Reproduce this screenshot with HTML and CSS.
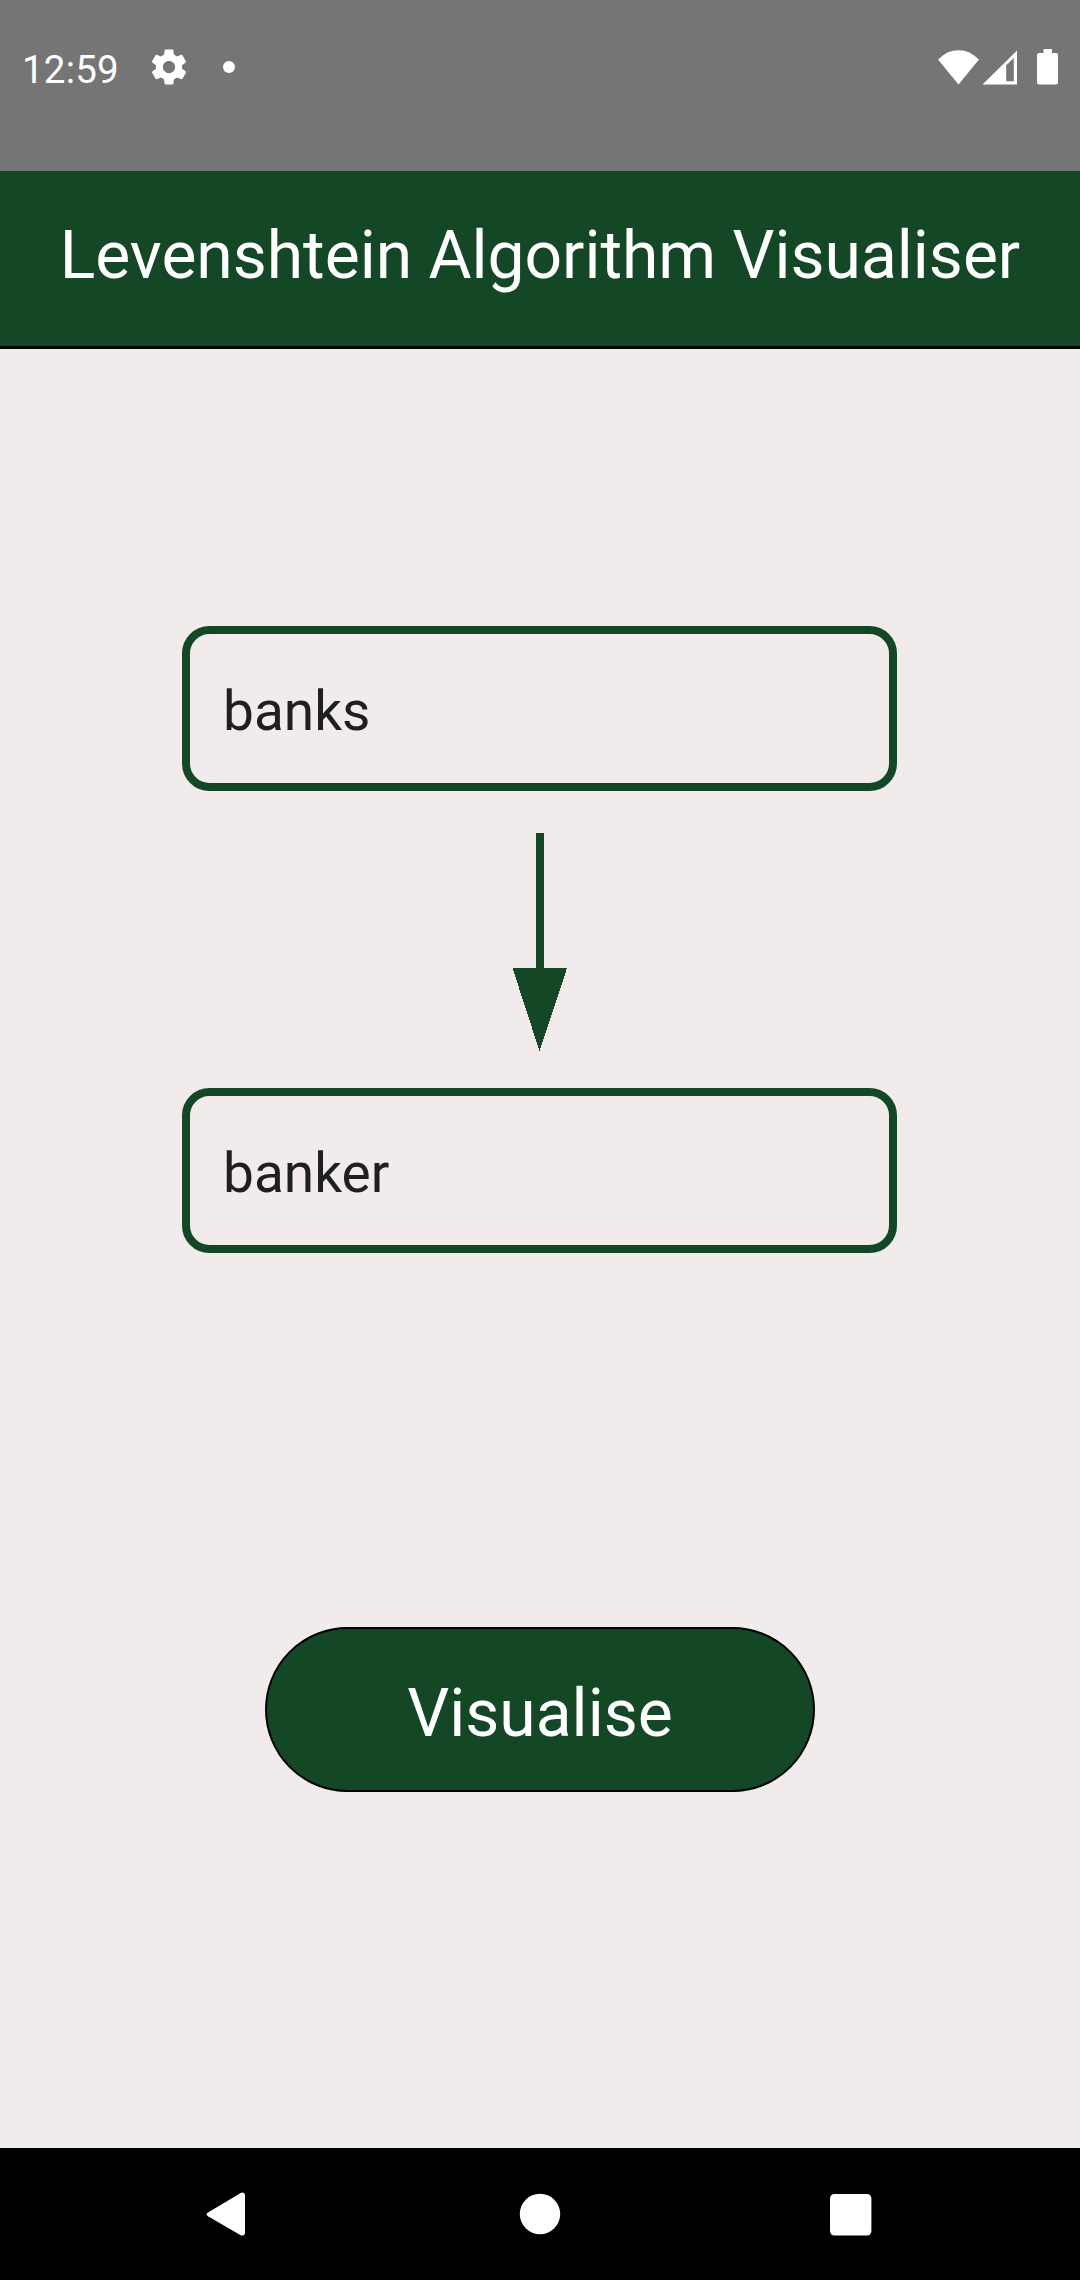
FILE: index.html
```html
<!DOCTYPE html>
<html lang="en">
<head>
<meta charset="utf-8">
<title>Levenshtein Algorithm Visualiser</title>
<link rel="stylesheet" href="styles.css">
</head>
<body>
<div class="screen">
  <div class="status-bar">
    <span class="clock">12:59</span>
    <svg class="gear" viewBox="0 0 24 24"><path d="M19.43 12.98c.04-.32.07-.64.07-.98s-.03-.66-.07-.98l2.11-1.65c.19-.15.24-.42.12-.64l-2-3.46c-.12-.22-.39-.3-.61-.22l-2.49 1c-.52-.4-1.08-.73-1.69-.98l-.38-2.65C14.46 2.18 14.25 2 14 2h-4c-.25 0-.46.18-.49.42l-.38 2.65c-.61.25-1.17.59-1.69.98l-2.49-1c-.23-.09-.49 0-.61.22l-2 3.46c-.13.22-.07.49.12.64l2.11 1.65c-.04.32-.07.65-.07.98s.03.66.07.98l-2.11 1.65c-.19.15-.24.42-.12.64l2 3.46c.12.22.39.3.61.22l2.49-1c.52.4 1.08.73 1.69.98l.38 2.65c.03.24.24.42.49.42h4c.25 0 .46-.18.49-.42l.38-2.65c.61-.25 1.17-.59 1.69-.98l2.49 1c.23.09.49 0 .61-.22l2-3.46c.12-.22.07-.49-.12-.64l-2.11-1.65zM12 15.5c-1.93 0-3.5-1.57-3.5-3.5s1.57-3.5 3.5-3.5 3.5 1.57 3.5 3.5-1.57 3.5-3.5 3.5z"/></svg>
    <span class="dot"></span>
    <svg class="system-icons" viewBox="0 0 122 38">
      <path d="M0 11.5Q9 2.2 20.5 2.2T41 11.5L20.5 36.5Z"/>
      <path fill-rule="evenodd" d="M44.5 36.5L79 2.5V36.5ZM68.2 17.3V33.3H75.8V10Z"/>
      <path d="M105.5 1H114V5H118Q120 5 120 7V34.5Q120 36.5 118 36.5H101Q99 36.5 99 34.5V7Q99 5 101 5H105.5Z"/>
    </svg>
  </div>
  <header class="app-bar"><h1 class="title">Levenshtein Algorithm Visualiser</h1></header>
  <main class="content">
    <input class="word" type="text" value="banks" aria-label="Source word">
    <svg class="arrow" viewBox="0 0 56 218" shape-rendering="crispEdges"><path d="M24 0h8v135h23L27.500 218L0.500 135H24Z"/></svg>
    <input class="word" type="text" value="banker" aria-label="Target word">
    <button class="visualise" type="button">Visualise</button>
  </main>
  <nav class="nav-bar">
    <svg class="nav-icon" viewBox="0 0 60 60"><path d="M9 28.400L41.700 8.900Q45.500 7.400 46 11V49Q45.500 52.600 41.700 51.200L9 32.200Q6 30.300 9 28.400Z"/></svg>
    <svg class="nav-icon" viewBox="0 0 60 60"><circle cx="30" cy="30" r="20.200"/></svg>
    <svg class="nav-icon" viewBox="0 0 60 60"><rect x="9" y="10" width="41.400" height="41.500" rx="4.500"/></svg>
  </nav>
</div>
</body>
</html>
```
FILE: styles.css
```css
* {
  box-sizing: border-box;
}

body {
  margin: 0;
  font-family: Roboto, "Liberation Sans", sans-serif;
}

svg {
  display: block;
  fill: #fff;
}

.screen {
  display: flex;
  flex-direction: column;
  width: 1080px;
  height: 2280px;
  background: #f1ebeb;
}

.status-bar {
  display: flex;
  align-items: center;
  height: 171px;
  padding: 0 20px 37px 22px;
  background: #757575;
  color: #fff;
}

.clock {
  width: 125.5px;
  padding-top: 6px;
  font-size: 38.5px;
  line-height: 46px;
  letter-spacing: 0.2px;
}

.gear {
  width: 42px;
  height: 42px;
}

.dot {
  width: 12px;
  height: 12px;
  margin-left: 33.5px;
  border-radius: 50%;
  background: #fff;
}

.system-icons {
  width: 122px;
  height: 38px;
  margin-left: auto;
}

.app-bar {
  height: 178px;
  border-bottom: 3px solid #000;
  background: #134726;
  color: #fff;
  text-align: center;
}

.title {
  margin: 0;
  padding-top: 46px;
  font-size: 66px;
  font-weight: 400;
  line-height: 78px;
  letter-spacing: -0.03px;
  white-space: nowrap;
}

.content {
  display: flex;
  flex: 1;
  flex-direction: column;
  align-items: center;
  padding-top: 277px;
}

.word {
  width: 715px;
  height: 165px;
  margin-right: 1px;
  padding: 4px 33px 0;
  border: 8px solid #134726;
  border-radius: 27.5px;
  background: transparent;
  color: #1f1f1f;
  font: 400 55px/65px Roboto, "Liberation Sans", sans-serif;
}

.arrow {
  width: 56px;
  height: 218px;
  margin: 42px 0 37px;
  fill: #134726;
}

.visualise {
  width: 550px;
  height: 165px;
  margin-top: 374px;
  padding: 8px 0 0;
  border: 2px solid #000;
  border-radius: 82.5px;
  background: #134726;
  color: #fff;
  font: 400 66px/78px Roboto, "Liberation Sans", sans-serif;
}

.nav-bar {
  display: flex;
  align-items: center;
  justify-content: center;
  gap: 251px;
  height: 132px;
  background: #000;
}

.nav-icon {
  width: 60px;
  height: 60px;
}
```
